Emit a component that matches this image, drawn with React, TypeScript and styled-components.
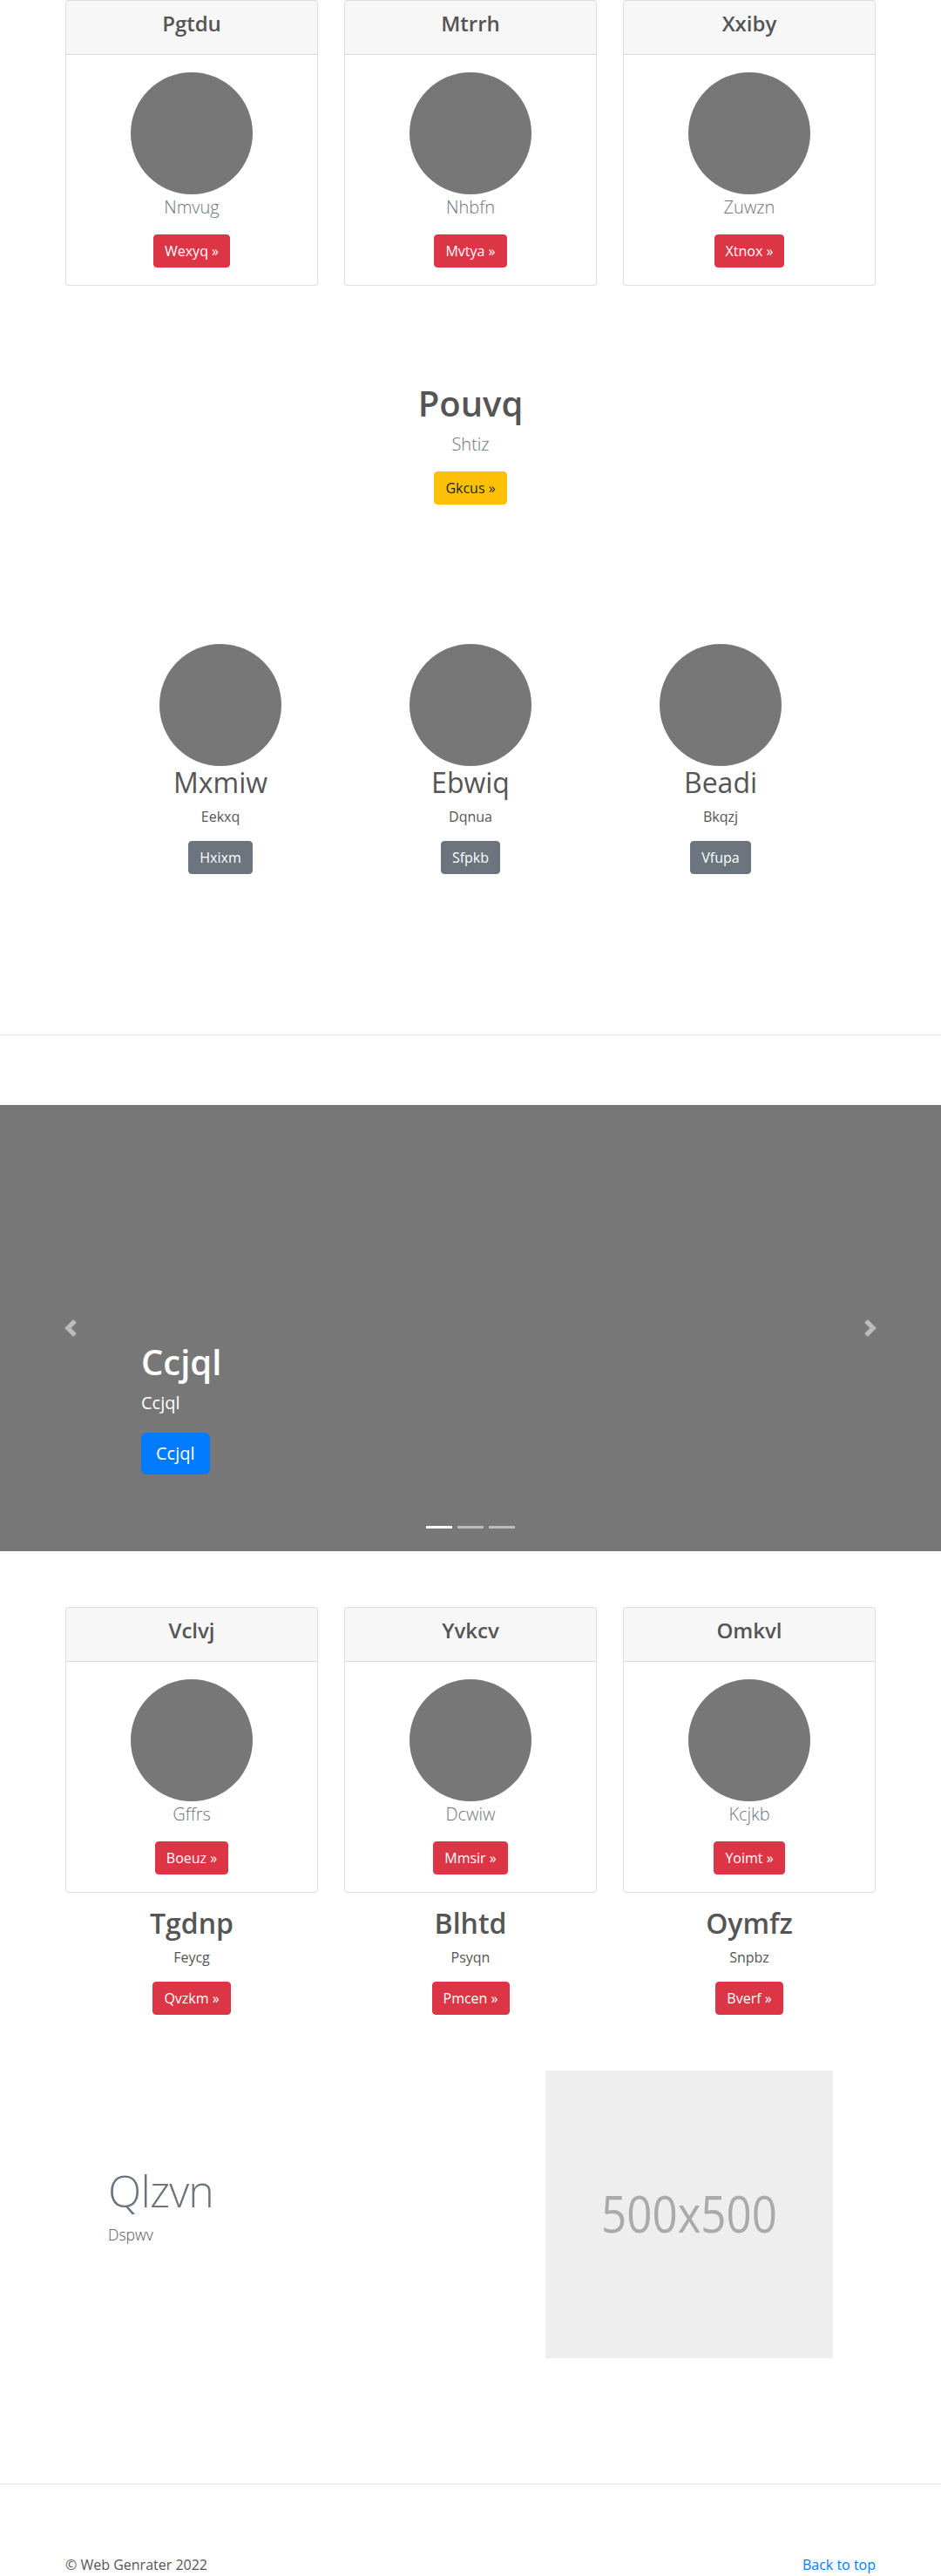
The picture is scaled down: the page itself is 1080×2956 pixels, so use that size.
import React from "react";
import styled, { createGlobalStyle, css } from "styled-components";

const GlobalStyle = createGlobalStyle`
  html, body { margin: 0; padding: 0; }
  body {
    font-family: "Open Sans", "Noto Sans", sans-serif;
    font-size: 16px;
    line-height: 1.5;
    color: #555;
    background: #fff;
  }
  * { box-sizing: border-box; }
`;

type Variant = "danger" | "warning" | "secondary" | "primary";

const variants: Record<Variant, ReturnType<typeof css>> = {
  danger: css`background: #dc3545; border-color: #dc3545; color: #fff;`,
  warning: css`background: #ffc107; border-color: #ffc107; color: #212529;`,
  secondary: css`background: #6c757d; border-color: #6c757d; color: #fff;`,
  primary: css`background: #007bff; border-color: #007bff; color: #fff;`,
};

const Btn = styled.a<{ $variant: Variant; $lg?: boolean }>`
  display: inline-block;
  font-weight: 400;
  text-align: center;
  border: 1px solid transparent;
  padding: 6px 12px;
  font-size: 16px;
  line-height: 1.5;
  border-radius: 4px;
  text-decoration: none;
  cursor: pointer;
  ${(p) => variants[p.$variant]}
  ${(p) =>
    p.$lg &&
    css`
      padding: 8px 16px;
      font-size: 20px;
      border-radius: 6px;
    `}
`;

const Container = styled.div`
  width: 930px;
  margin: 0 auto;
`;

const Deck = styled(Container)<{ $top?: number }>`
  display: grid;
  grid-template-columns: repeat(3, 1fr);
  column-gap: 30px;
  margin-top: ${(p) => p.$top ?? 0}px;
`;

const Card = styled.div`
  border: 1px solid rgba(0, 0, 0, 0.125);
  border-radius: 4px;
  text-align: center;
  background: #fff;
  overflow: hidden;
`;

const CardHeader = styled.div`
  padding: 12px 20px;
  background: rgba(0, 0, 0, 0.03);
  border-bottom: 1px solid rgba(0, 0, 0, 0.125);
`;

const CardTitle = styled.h4`
  margin: 0 0 8px;
  font-size: 24px;
  font-weight: 600;
  line-height: 1.2;
  color: #555;
`;

const CardBody = styled.div`
  padding: 20px;
  display: flex;
  flex-direction: column;
  align-items: center;
`;

const Circle = styled.div`
  width: 140px;
  height: 140px;
  border-radius: 50%;
  background: #777;
  flex: none;
`;

const Lead = styled.p`
  margin: 0 0 16px;
  font-size: 20px;
  font-weight: 300;
  line-height: 1.5;
  color: #6c757d;
`;

const Hero = styled.section`
  padding-top: 111px;
  display: flex;
  flex-direction: column;
  align-items: center;
  text-align: center;
`;

const HeroTitle = styled.h1`
  margin: 0 0 8px;
  font-size: 40px;
  font-weight: 600;
  line-height: 1.2;
  color: #555;
`;

const Marketing = styled.section`
  width: 861px;
  margin: 160px auto 0;
  display: grid;
  grid-template-columns: repeat(3, 1fr);
`;

const Column = styled.div`
  display: flex;
  flex-direction: column;
  align-items: center;
  text-align: center;
`;

const ColTitle = styled.h2<{ $weight: number }>`
  margin: 0 0 8px;
  font-size: 32px;
  font-weight: ${(p) => p.$weight};
  line-height: 1.2;
  color: #555;
`;

const SmallText = styled.p`
  margin: 0 0 16px;
  font-size: 16px;
  line-height: 1.5;
  color: #555;
`;

const Divider = styled.hr<{ $top: number }>`
  margin: ${(p) => p.$top}px 0 80px;
  border: 0;
  border-top: 1px solid #e5e5e5;
  height: 0;
`;

const Carousel = styled.section`
  position: relative;
  height: 512px;
  background: #777;
  overflow: hidden;
`;

const Control = styled.a<{ $side: "left" | "right" }>`
  position: absolute;
  top: 0;
  bottom: 0;
  ${(p) => (p.$side === "left" ? "left: 0;" : "right: 0;")}
  width: 15%;
  display: flex;
  align-items: center;
  justify-content: center;
  opacity: 0.5;
`;

const Caption = styled.div`
  position: absolute;
  left: 15%;
  right: 15%;
  bottom: 52px;
  padding: 20px 0;
  color: #fff;
  text-align: left;
`;

const CaptionTitle = styled.h1`
  margin: 0 0 8px;
  font-size: 40px;
  font-weight: 600;
  line-height: 1.2;
  color: #fff;
`;

const CaptionText = styled.p`
  margin: 0 0 19px;
  font-size: 20px;
  line-height: 1.5;
`;

const CaptionAction = styled.div`
  display: flex;
  margin-bottom: 16px;
`;

const Indicators = styled.ol`
  position: absolute;
  left: 0;
  right: 0;
  bottom: 26px;
  margin: 0;
  padding: 0;
  list-style: none;
  display: flex;
  justify-content: center;
  gap: 6px;
`;

const Indicator = styled.li<{ $active?: boolean }>`
  width: 30px;
  height: 3px;
  background: #fff;
  opacity: ${(p) => (p.$active ? 1 : 0.5)};
`;

const SubRow = styled(Deck)`
  margin-top: 16px;
`;

const Featurette = styled(Container)`
  margin-top: 64px;
  padding: 0 49px;
  display: grid;
  grid-template-columns: 1fr 330px;
  align-items: center;
`;

const FeatHeading = styled.h2`
  margin: 0 0 12px;
  font-size: 50px;
  font-weight: 300;
  line-height: 1;
  letter-spacing: -0.8px;
  color: #6c757d;
`;

const FeatText = styled.p`
  margin: 0 0 16px;
  font-size: 17.6px;
  font-weight: 300;
  line-height: 1.5;
  color: #555;
`;

const Placeholder = styled.svg`
  display: block;
  width: 330px;
  height: 330px;
`;

const Footer = styled(Container)`
  display: flex;
  justify-content: space-between;
  font-size: 16px;
  line-height: 1.5;
  color: #555;
`;

const FooterLink = styled.a`
  color: #007bff;
  text-decoration: none;
`;

const topCards = [
  { title: "Pgtdu", text: "Nmvug", btn: "Wexyq" },
  { title: "Mtrrh", text: "Nhbfn", btn: "Mvtya" },
  { title: "Xxiby", text: "Zuwzn", btn: "Xtnox" },
];

const marketing = [
  { title: "Mxmiw", text: "Eekxq", btn: "Hxixm" },
  { title: "Ebwiq", text: "Dqnua", btn: "Sfpkb" },
  { title: "Beadi", text: "Bkqzj", btn: "Vfupa" },
];

const bottomCards = [
  { title: "Vclvj", text: "Gffrs", btn: "Boeuz" },
  { title: "Yvkcv", text: "Dcwiw", btn: "Mmsir" },
  { title: "Omkvl", text: "Kcjkb", btn: "Yoimt" },
];

const subCols = [
  { title: "Tgdnp", text: "Feycg", btn: "Qvzkm" },
  { title: "Blhtd", text: "Psyqn", btn: "Pmcen" },
  { title: "Oymfz", text: "Snpbz", btn: "Bverf" },
];

type Item = { title: string; text: string; btn: string };

function CardDeck({ items, top }: { items: Item[]; top?: number }) {
  return (
    <Deck $top={top}>
      {items.map((c) => (
        <Card key={c.title}>
          <CardHeader>
            <CardTitle>{c.title}</CardTitle>
          </CardHeader>
          <CardBody>
            <Circle />
            <Lead>{c.text}</Lead>
            <Btn $variant="danger">{c.btn} &raquo;</Btn>
          </CardBody>
        </Card>
      ))}
    </Deck>
  );
}

const Chevron = ({ dir }: { dir: "prev" | "next" }) => (
  <svg width="20" height="20" viewBox="0 0 8 8" fill="#fff">
    {dir === "prev" ? (
      <path d="M5.25 0l-4 4 4 4 1.5-1.5L4.25 4l2.5-2.5L5.25 0z" />
    ) : (
      <path d="M2.75 0l-1.5 1.5L3.75 4l-2.5 2.5L2.75 8l4-4-4-4z" />
    )}
  </svg>
);

export default function App() {
  return (
    <>
      <GlobalStyle />
      <CardDeck items={topCards} />

      <Hero>
        <HeroTitle>Pouvq</HeroTitle>
        <Lead>Shtiz</Lead>
        <Btn $variant="warning">Gkcus &raquo;</Btn>
      </Hero>

      <Marketing>
        {marketing.map((m) => (
          <Column key={m.title}>
            <Circle />
            <ColTitle $weight={400}>{m.title}</ColTitle>
            <SmallText>{m.text}</SmallText>
            <Btn $variant="secondary">{m.btn}</Btn>
          </Column>
        ))}
      </Marketing>

      <Divider $top={184} />

      <Carousel>
        <Control $side="left">
          <Chevron dir="prev" />
        </Control>
        <Control $side="right">
          <Chevron dir="next" />
        </Control>
        <Caption>
          <CaptionTitle>Ccjql</CaptionTitle>
          <CaptionText>Ccjql</CaptionText>
          <CaptionAction>
            <Btn $variant="primary" $lg>
              Ccjql
            </Btn>
          </CaptionAction>
        </Caption>
        <Indicators>
          <Indicator $active />
          <Indicator />
          <Indicator />
        </Indicators>
      </Carousel>

      <CardDeck items={bottomCards} top={64} />

      <SubRow>
        {subCols.map((s) => (
          <Column key={s.title}>
            <ColTitle $weight={600}>{s.title}</ColTitle>
            <SmallText>{s.text}</SmallText>
            <Btn $variant="danger">{s.btn} &raquo;</Btn>
          </Column>
        ))}
      </SubRow>

      <Featurette>
        <div>
          <FeatHeading>Qlzvn</FeatHeading>
          <FeatText>Dspwv</FeatText>
        </div>
        <Placeholder viewBox="0 0 330 330">
          <rect width="330" height="330" fill="#eee" />
          <text
            x="165"
            y="165"
            dy="21"
            textAnchor="middle"
            fill="#aaa"
            fontSize="58"
            fontFamily="'Open Sans', sans-serif"
            textLength="202"
            lengthAdjust="spacingAndGlyphs"
          >
            500x500
          </text>
        </Placeholder>
      </Featurette>

      <Divider $top={144} />

      <Footer>
        <span>&copy; Web Genrater 2022</span>
        <FooterLink href="#">Back to top</FooterLink>
      </Footer>
    </>
  );
}
